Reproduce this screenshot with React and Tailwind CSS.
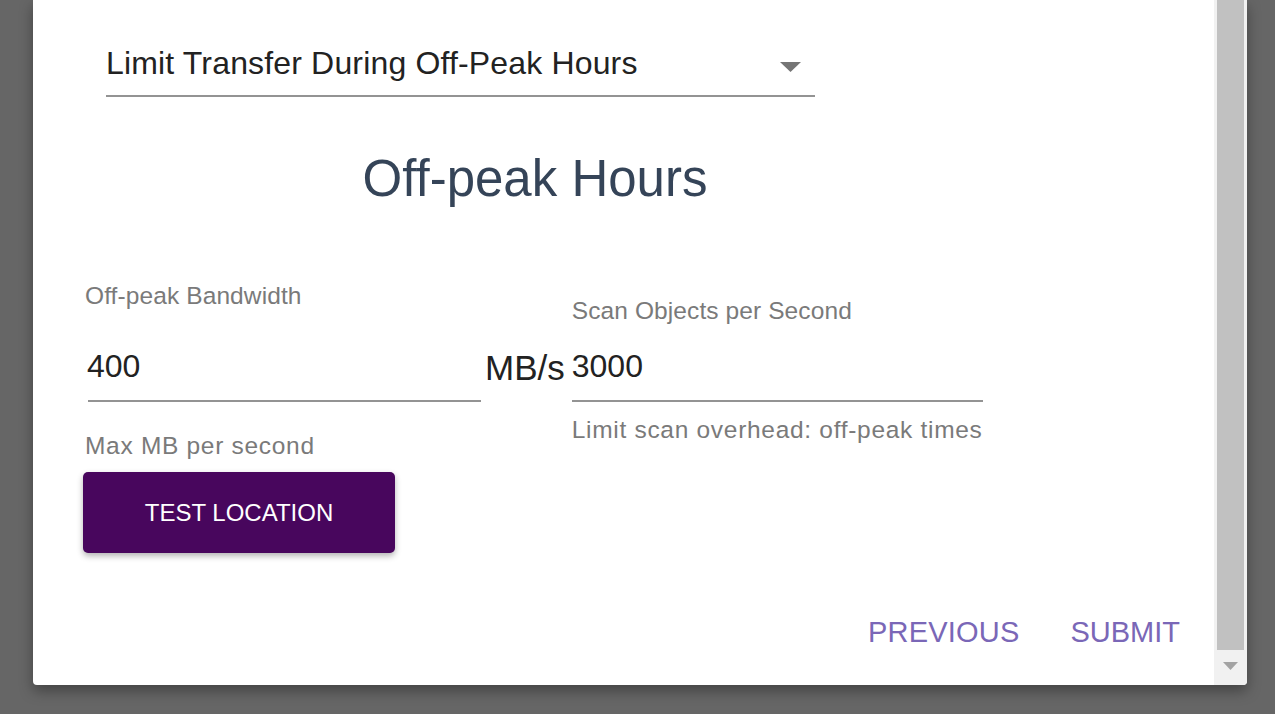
import React from 'react'

const font = { fontFamily: '"Liberation Sans", Arial, sans-serif' }

const App = () => {
    return (
        <div style={font} className="w-[1275px] h-[714px] bg-[#666666] overflow-hidden">
            {/* Dialog card, top cut off by the viewport */}
            <div className="ml-[33px] w-[1214px] h-[685px] bg-white rounded-b-[4px] shadow-[0_6px_14px_rgba(0,0,0,0.35)] flex overflow-hidden">

                {/* Content */}
                <div className="flex-1 flex flex-col pl-[52px] pr-[34px]">
                    <div className="w-[900px] flex flex-col">

                        {/* Select */}
                        <div className="ml-[21px] w-[709px] mt-[43px] flex justify-between border-b-2 border-[#939393] pb-[12px]">
                            <span className="text-[32px] leading-[40px] tracking-[0.16px] text-[#222222]">Limit Transfer During Off-Peak Hours</span>
                            <svg width="21" height="10" viewBox="0 0 21 10" className="mt-[19px] mr-[14px]">
                                <path d="M0 0 L21 0 L10.5 10 Z" fill="#757575" />
                            </svg>
                        </div>

                        {/* Heading */}
                        <h2 className="mt-[52px] text-center text-[51px] leading-[60px] text-[#354458]">Off-peak Hours</h2>

                        {/* Fields */}
                        <div className="flex items-start">
                            {/* Left field */}
                            <div className="flex flex-col">
                                <label className="mt-[72px] text-[24.5px] leading-[30px] tracking-[0.1px] text-[#7a7a7a]">Off-peak Bandwidth</label>
                                <div className="ml-[3px] w-[393px] mt-[35px] border-b-2 border-[#939393] pb-[14px]">
                                    <div className="text-[32px] leading-[40px] text-[#222222] -ml-[1px]">400</div>
                                </div>
                                <div className="mt-[29px] text-[24.5px] leading-[30px] tracking-[0.7px] text-[#7a7a7a]">Max MB per second</div>
                                <button className="mt-[11px] -ml-[2px] w-[312px] h-[81px] rounded-[5px] bg-[#48065d] text-white text-[24px] shadow-[0_3px_6px_rgba(0,0,0,0.3)]">
                                    TEST LOCATION
                                </button>
                            </div>

                            {/* Adornment */}
                            <div className="ml-[4px] mt-[139px] text-[35px] leading-[40px] text-[#222222]">MB/s</div>

                            {/* Right field */}
                            <div className="ml-[7px] flex flex-col">
                                <label className="mt-[87px] text-[24.5px] leading-[30px] tracking-[0.1px] text-[#7a7a7a]">Scan Objects per Second</label>
                                <div className="w-[411px] mt-[20px] border-b-2 border-[#939393] pb-[14px]">
                                    <div className="text-[32px] leading-[40px] text-[#222222]">3000</div>
                                </div>
                                <div className="mt-[13px] text-[24.5px] leading-[30px] tracking-[0.7px] text-[#7a7a7a] whitespace-nowrap">Limit scan overhead: off-peak times</div>
                            </div>
                        </div>
                    </div>

                    {/* Actions */}
                    <div className="mt-[61px] flex justify-end gap-[51px]">
                        <button className="text-[29px] leading-[36px] tracking-[0.2px] text-[#7a67b7]">PREVIOUS</button>
                        <button className="text-[29px] leading-[36px] text-[#7a67b7]">SUBMIT</button>
                    </div>
                </div>

                {/* Scrollbar */}
                <div className="w-[33px] bg-[#f1f1f1] flex flex-col">
                    <div className="mx-[3px] h-[650px] bg-[#c1c1c1]" />
                    <div className="flex-1 flex justify-center pt-[12px]">
                        <svg width="15" height="8" viewBox="0 0 15 8">
                            <path d="M0 0 L15 0 L7.5 8 Z" fill="#a3a3a3" />
                        </svg>
                    </div>
                </div>
            </div>
        </div>
    )
}

export default App
